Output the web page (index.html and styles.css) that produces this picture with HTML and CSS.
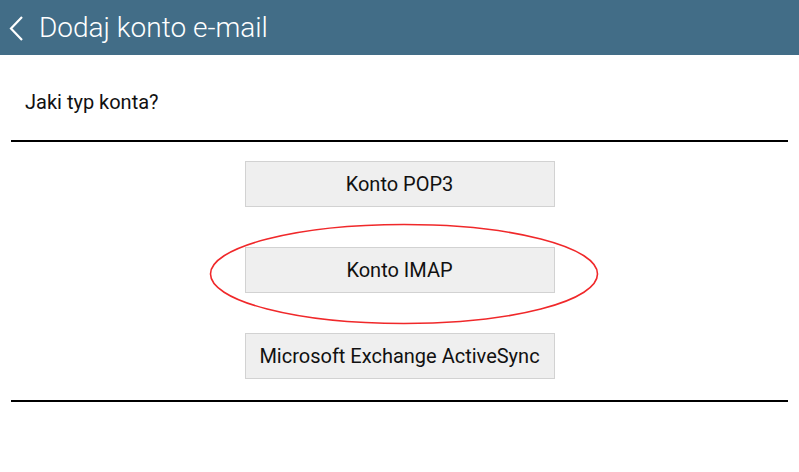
FILE: index.html
```html
<!DOCTYPE html>
<html lang="pl">
<head>
    <meta charset="UTF-8">
    <title>Dodaj konto e-mail</title>
    <link rel="stylesheet" href="styles.css">
</head>
<body>
    <header class="top-bar">
        <svg class="back" width="24" height="30" viewBox="0 0 24 30">
            <polyline points="21,4 10,15.5 21,27" fill="none" stroke="#fff" stroke-width="2.2"/>
        </svg>
        <h1 class="title">Dodaj konto e-mail</h1>
    </header>

    <main class="content">
        <p class="question">Jaki typ konta?</p>
        <div class="options">
            <button class="option">Konto POP3</button>
            <div class="option-wrap">
                <button class="option">Konto IMAP</button>
                <svg class="mark" width="392" height="104" viewBox="0 0 392 104">
                    <ellipse cx="196" cy="52" rx="193.5" ry="49.5" fill="none" stroke="#f0282a" stroke-width="1.6"/>
                </svg>
            </div>
            <button class="option">Microsoft Exchange ActiveSync</button>
        </div>
    </main>
</body>
</html>
```

FILE: styles.css
```css
body {
    margin: 0;
    font-family: Roboto, "Liberation Sans", sans-serif;
    background-color: #fff;
}

.top-bar {
    height: 55px;
    background-color: #426d87;
    display: flex;
    align-items: center;
    padding-left: 1px;
}

.back {
    display: block;
    margin-top: 1px;
}

.title {
    margin: 0 0 0 14px;
    font-size: 28px;
    font-weight: 300;
    color: #fff;
}

.content {
    padding: 0 11px;
}

.question {
    margin: 0;
    padding: 35px 0 0 14px;
    height: 50px;
    font-size: 20px;
    color: #111;
    border-bottom: 2px solid #000;
}

.options {
    display: flex;
    flex-direction: column;
    align-items: center;
    gap: 40px;
    padding: 19px 0 21px;
    border-bottom: 2px solid #000;
}

.option-wrap {
    position: relative;
}

.option {
    display: block;
    width: 310px;
    height: 46px;
    background-color: #efefef;
    border: 1px solid #d2d2d2;
    font-family: Roboto, "Liberation Sans", sans-serif;
    font-size: 20px;
    color: #111;
    padding: 0;
}

.mark {
    position: absolute;
    left: -37px;
    top: -25px;
    pointer-events: none;
}
```
